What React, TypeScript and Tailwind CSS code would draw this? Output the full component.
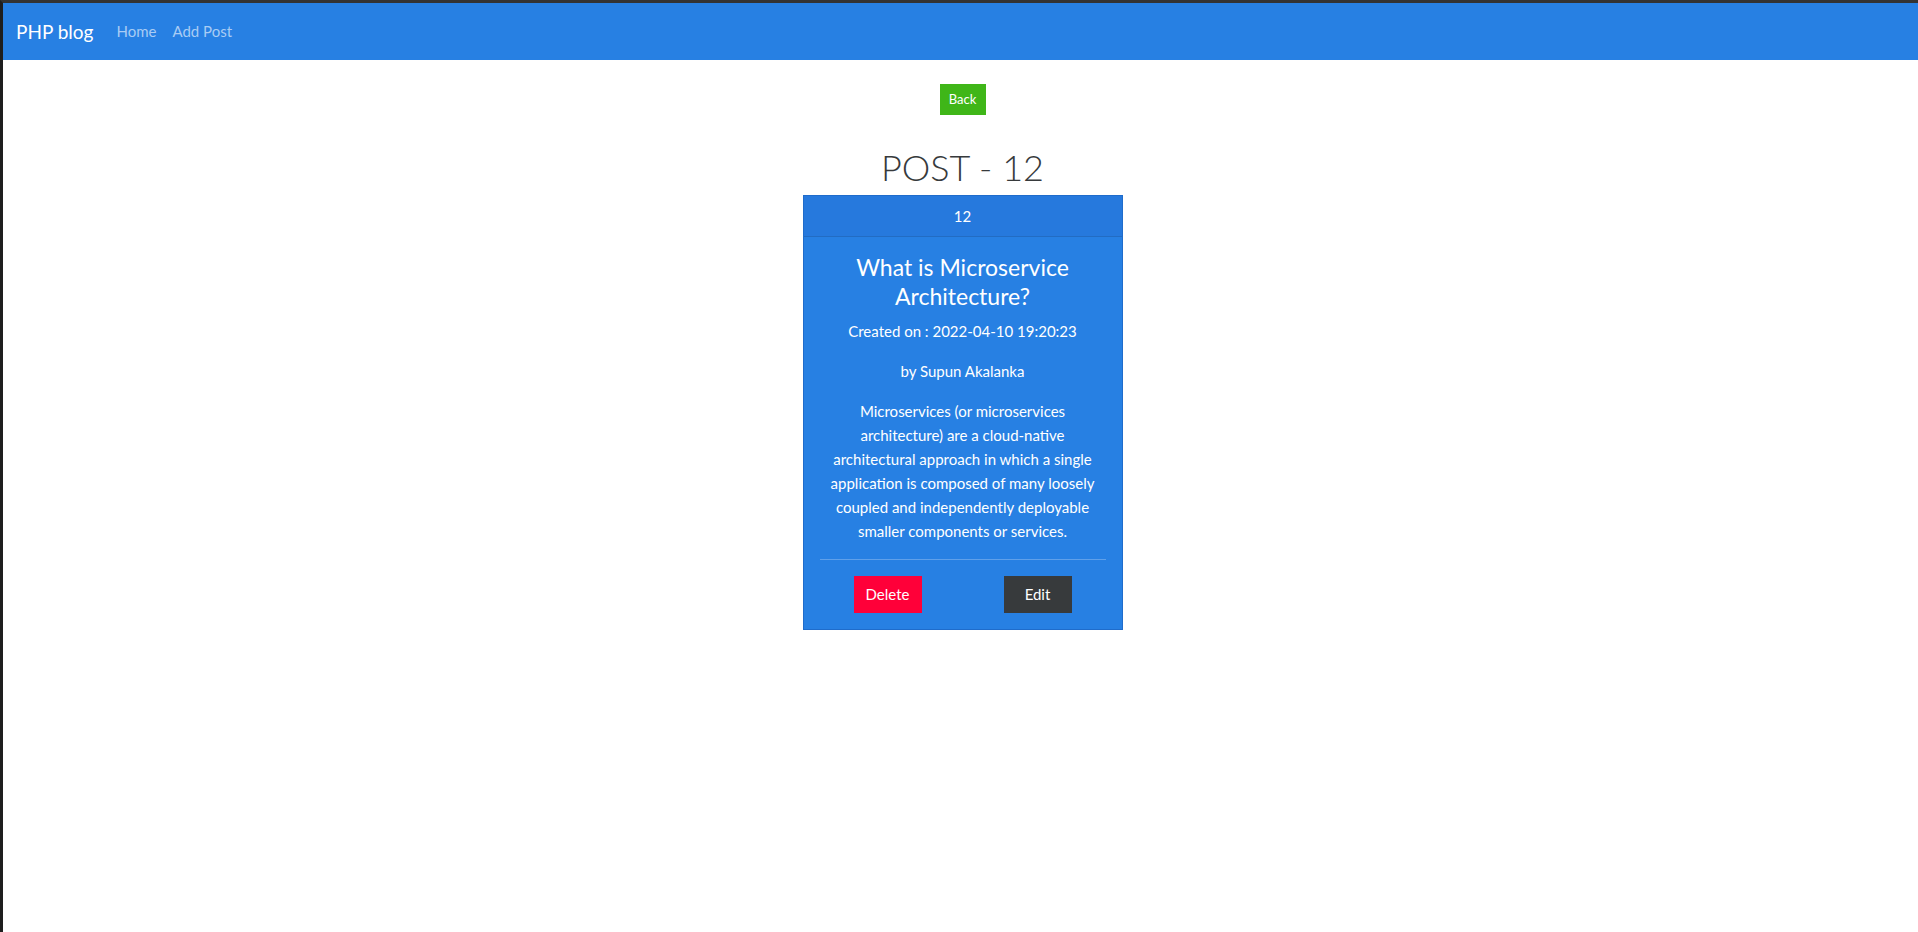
const post = {
  id: 12,
  title: "What is Microservice Architecture?",
  created: "2022-04-10 19:20:23",
  author: "Supun Akalanka",
  body: "Microservices (or microservices architecture) are a cloud-native architectural approach in which a single application is composed of many loosely coupled and independently deployable smaller components or services.",
};

const Navbar = () => {
  return (
    <nav className="h-[57px] bg-[#2780e3] flex items-center px-[13px]">
      <a href="#" className="text-white text-[19px] mr-[15px] leading-[30px]">
        PHP blog
      </a>
      <a href="#" className="px-2 text-[#a9ccf4] text-[15px]">
        Home
      </a>
      <a href="#" className="px-2 text-[#a9ccf4] text-[15px]">
        Add Post
      </a>
    </nav>
  );
};

const PostCard = () => {
  return (
    <div className="w-[320px] bg-[#2780e3] border border-[#1f6ccb] text-white text-center text-[15px]">
      <div className="h-[41px] flex items-center justify-center bg-[#2679dd] border-b border-[#226cc3]">
        {post.id}
      </div>
      <div className="p-4">
        <h4 className="text-[23px] leading-[29px] mb-2">{post.title}</h4>
        <p className="leading-6 mb-4">Created on : {post.created}</p>
        <p className="leading-6 mb-4">by {post.author}</p>
        <p className="leading-6 mb-4 px-1">{post.body}</p>
        <hr className="border-t border-[#5fa0ea] mb-4" />
        <div className="flex justify-between px-[34px]">
          <button className="w-[68px] h-[37px] bg-[#ff0039] text-white">
            Delete
          </button>
          <button className="w-[68px] h-[37px] bg-[#373a3c] text-white">
            Edit
          </button>
        </div>
      </div>
    </div>
  );
};

const App = () => {
  return (
    <div
      className="min-h-[932px] bg-white border-t-[3px] border-t-[#333333] border-l-[3px] border-l-[#1e1e1e] text-[#373a3c]"
      style={{ fontFamily: "Lato, 'Open Sans', sans-serif" }}
    >
      <Navbar />
      <div className="flex flex-col items-center pt-6 pl-1">
        <button className="w-[46px] h-[31px] bg-[#3fb618] text-white text-[13px]">
          Back
        </button>
        <h1 className="mt-7 mb-1 text-[36px] leading-[48px] font-light">
          POST - {post.id}
        </h1>
        <PostCard />
      </div>
    </div>
  );
};

export default App;
